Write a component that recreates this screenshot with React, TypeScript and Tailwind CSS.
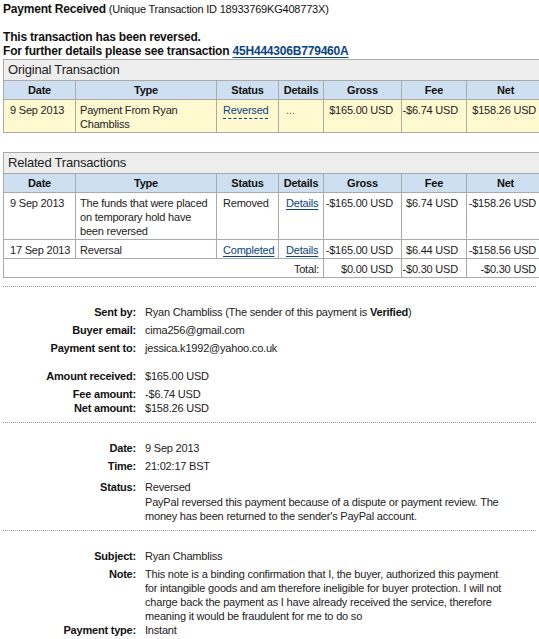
import React from "react";

interface TxRow {
  date: string;
  type: React.ReactNode;
  status: React.ReactNode;
  details: React.ReactNode;
  gross: string;
  fee: string;
  net: string;
}

const linkCls = "text-[#084482] underline underline-offset-[2px]";

const originalRows: TxRow[] = [
  {
    date: "9 Sep 2013",
    type: (
      <>
        Payment From Ryan
        <br />
        Chambliss
      </>
    ),
    status: (
      <span className="text-[#084482] underline decoration-dashed underline-offset-[4px]">
        Reversed
      </span>
    ),
    details: <span className="text-[#555]">...</span>,
    gross: "$165.00 USD",
    fee: "-$6.74 USD",
    net: "$158.26 USD",
  },
];

const relatedRows: TxRow[] = [
  {
    date: "9 Sep 2013",
    type: (
      <>
        The funds that were placed
        <br />
        on temporary hold have
        <br />
        been reversed
      </>
    ),
    status: "Removed",
    details: <span className={linkCls}>Details</span>,
    gross: "-$165.00 USD",
    fee: "$6.74 USD",
    net: "-$158.26 USD",
  },
  {
    date: "17 Sep 2013",
    type: "Reversal",
    status: <span className={linkCls}>Completed</span>,
    details: <span className={linkCls}>Details</span>,
    gross: "-$165.00 USD",
    fee: "$6.44 USD",
    net: "-$158.56 USD",
  },
];

const headers = ["Date", "Type", "Status", "Details", "Gross", "Fee", "Net"];

function TxTable({
  title,
  rows,
  highlight,
  total,
}: {
  title: string;
  rows: TxRow[];
  highlight?: boolean;
  total?: string[];
}) {
  const td = "border border-[#aaaaaa] align-top pt-[3px] pb-[1px] whitespace-nowrap";
  return (
    <table className="table-fixed border-collapse w-[541px]">
      <colgroup>
        <col className="w-[72px]" />
        <col className="w-[141px]" />
        <col className="w-[62px]" />
        <col className="w-[45px]" />
        <col className="w-[78px]" />
        <col className="w-[65px]" />
        <col className="w-[78px]" />
      </colgroup>
      <tbody>
        <tr>
          <td
            colSpan={7}
            className="border border-[#aaaaaa] bg-[#eeeeee] h-[20px] px-[4px] text-[13px] leading-[20px] text-[#222]"
          >
            {title}
          </td>
        </tr>
        <tr className="bg-[#cddff0]">
          {headers.map((h) => (
            <td
              key={h}
              className="border border-[#aaaaaa] py-[2px] text-center font-bold text-[#111]"
            >
              {h}
            </td>
          ))}
        </tr>
        {rows.map((r, i) => (
          <tr key={i} className={highlight ? "bg-[#fff9cf]" : ""}>
            <td className={`${td} pl-[6px]`}>{r.date}</td>
            <td className={`${td} pl-[4px]`}>{r.type}</td>
            <td className={`${td} pl-[6px]`}>{r.status}</td>
            <td className={`${td} pl-[7px]`}>{r.details}</td>
            <td className={`${td} text-right pr-[8px]`}>{r.gross}</td>
            <td className={`${td} text-right pr-[8px]`}>{r.fee}</td>
            <td className={`${td} text-right pr-[8px]`}>{r.net}</td>
          </tr>
        ))}
        {total && (
          <tr>
            <td colSpan={3} className={`${td} border-r-0`}></td>
            <td className={`${td} text-right pr-[4px] border-l-0`}>Total:</td>
            <td className={`${td} text-right pr-[8px]`}>{total[0]}</td>
            <td className={`${td} text-right pr-[8px]`}>{total[1]}</td>
            <td className={`${td} text-right pr-[8px]`}>{total[2]}</td>
          </tr>
        )}
      </tbody>
    </table>
  );
}

function Field({
  label,
  children,
  className = "",
}: {
  label: string;
  children: React.ReactNode;
  className?: string;
}) {
  return (
    <div className={`flex ${className}`}>
      <div className="w-[133px] shrink-0 text-right font-bold text-[#111]">{label}</div>
      <div className="ml-[9px] whitespace-nowrap">{children}</div>
    </div>
  );
}

export default function App() {
  return (
    <div
      className="h-[639px] w-full overflow-hidden bg-white text-[11px] leading-[14px] tracking-[-0.2px] text-[#222] px-[3px] pt-[2px]"
      style={{ fontFamily: '"Liberation Sans", Arial, sans-serif' }}
    >
      <div className="text-[#111] whitespace-nowrap">
        <span className="font-bold text-[12px]">Payment Received</span>{" "}
        (Unique Transaction ID 18933769KG408773X)
      </div>

      <div className="mt-[14px] text-[12px] font-bold text-[#111] whitespace-nowrap">
        <div>This transaction has been reversed.</div>
        <div>
          For further details please see transaction{" "}
          <span className={linkCls}>45H444306B779460A</span>
        </div>
      </div>

      <div className="mt-[1px]">
        <TxTable title="Original Transaction" rows={originalRows} highlight />
      </div>

      <div className="mt-[19px]">
        <TxTable
          title="Related Transactions"
          rows={relatedRows}
          total={["$0.00 USD", "-$0.30 USD", "-$0.30 USD"]}
        />
      </div>

      <div className="mt-[8px] border-t border-dotted border-[#999999]" />

      <div className="pt-[18px]">
        <Field label="Sent by:">
          Ryan Chambliss (The sender of this payment is <b className="text-[#111]">Verified</b>)
        </Field>
        <Field label="Buyer email:" className="mt-[4px]">
          cima256@gmail.com
        </Field>
        <Field label="Payment sent to:" className="mt-[4px]">
          jessica.k1992@yahoo.co.uk
        </Field>
        <Field label="Amount received:" className="mt-[14px]">
          $165.00 USD
        </Field>
        <Field label="Fee amount:" className="mt-[4px]">
          -$6.74 USD
        </Field>
        <Field label="Net amount:">$158.26 USD</Field>
      </div>

      <div className="mt-[7px] border-t border-dotted border-[#999999]" />

      <div className="pt-[18px]">
        <Field label="Date:">9 Sep 2013</Field>
        <Field label="Time:" className="mt-[4px]">
          21:02:17 BST
        </Field>
        <Field label="Status:" className="mt-[7px]">
          <div>Reversed</div>
          <div className="mt-[1px]">
            PayPal reversed this payment because of a dispute or payment review. The
            <br />
            money has been returned to the sender's PayPal account.
          </div>
        </Field>
      </div>

      <div className="mt-[7px] border-t border-dotted border-[#999999]" />

      <div className="pt-[18px]">
        <Field label="Subject:">Ryan Chambliss</Field>
        <Field label="Note:" className="mt-[4px]">
          This note is a binding confirmation that I, the buyer, authorized this payment
          <br />
          for intangible goods and am therefore ineligible for buyer protection. I will not
          <br />
          charge back the payment as I have already received the service, therefore
          <br />
          meaning it would be fraudulent for me to do so
        </Field>
        <Field label="Payment type:">Instant</Field>
      </div>
    </div>
  );
}
